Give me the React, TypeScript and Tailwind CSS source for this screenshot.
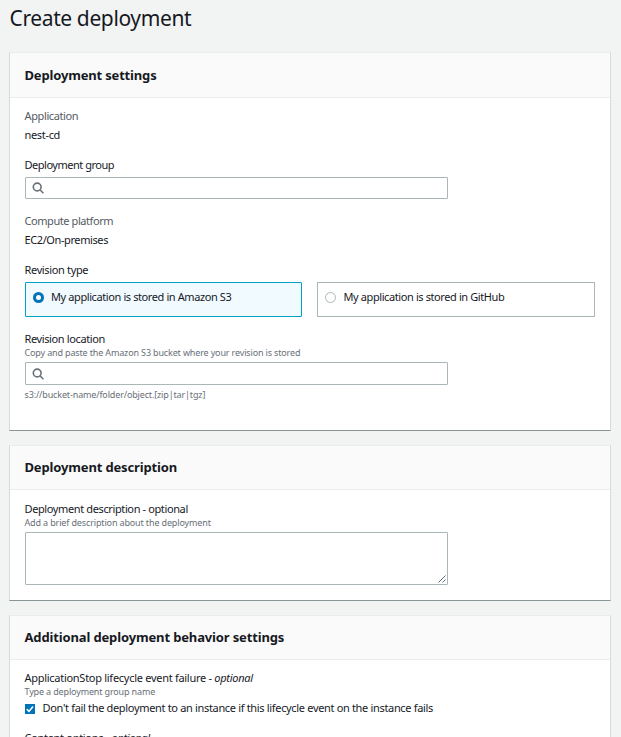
import type { ReactNode } from "react";

function Card({ title, titleClass, headerClass, className, children }: { title: string; titleClass: string; headerClass: string; className: string; children: ReactNode }) {
  return (
    <section className={`flex w-[602px] shrink-0 flex-col border border-t-[#eaeded] border-x-[#d5dbdb] border-b-[#879596] bg-white ${className}`}>
      <header className={`flex shrink-0 items-start border-b border-[#eaeded] bg-[#fafafa] pl-[14.5px] ${headerClass}`}>
        <h2 className={`text-[13px] leading-[20px] font-bold whitespace-nowrap ${titleClass}`}>{title}</h2>
      </header>
      <div className="flex flex-col px-[15px]">{children}</div>
    </section>
  );
}

function Line({ className, children }: { className: string; children: ReactNode }) {
  return <div className={`-ml-[0.5px] h-[18px] self-start text-[11px] leading-[18px] whitespace-nowrap ${className}`}>{children}</div>;
}

function Hint({ className, children }: { className: string; children: ReactNode }) {
  return <div className={`-ml-[0.5px] h-[11px] self-start text-[9px] leading-[11px] whitespace-nowrap text-[#687078] ${className}`}>{children}</div>;
}

function SearchField({ className }: { className: string }) {
  return (
    <div className={`flex w-[423px] items-center rounded-[1px] border border-[#aab7b8] bg-white pl-[6px] ${className}`}>
      <svg width="12" height="12" viewBox="0 0 12 12" fill="none" stroke="#687078" strokeWidth="1.6">
        <circle cx="5.2" cy="5" r="3.9" />
        <path d="M8 7.8 11.4 11.2" />
      </svg>
    </div>
  );
}

export default function App() {
  return (
    <main className="flex h-[737px] w-[621px] flex-col overflow-hidden bg-[#f2f3f3] pl-[9px] font-['Noto_Sans','Open_Sans',sans-serif] text-[#16191f]">
      <h1 className="mt-[3px] mb-[19px] h-[30px] shrink-0 self-start pl-[0.5px] text-[21px] leading-[30px] whitespace-nowrap tracking-[-0.38px]">Create deployment</h1>

      <Card title="Deployment settings" titleClass="tracking-[-0.17px]" headerClass="h-[45px] pt-[12px]" className="h-[379px]">
        <Line className="mt-[9px] text-[#545b64] tracking-[-0.38px]">Application</Line>
        <Line className="mt-px tracking-[-0.33px]">nest-cd</Line>
        <Line className="mt-3 tracking-[-0.48px]">Deployment group</Line>
        <SearchField className="mt-[3px] h-[22px]" />
        <Line className="mt-[13px] text-[#545b64] tracking-[-0.43px]">Compute platform</Line>
        <Line className="mt-px tracking-[-0.4px]">EC2/On-premises</Line>
        <Line className="mt-3 tracking-[-0.35px]">Revision type</Line>
        <div className="mt-[3px] flex gap-[15px]">
          <div className="flex h-[35px] w-[277px] rounded-[1px] border border-[#00a1c9] bg-[#f1faff] pt-[5px] pl-[7px]">
            <span className="mt-[4px] mr-[7.5px] flex size-[11px] items-center justify-center rounded-full bg-[#0073bb]">
              <span className="size-[5px] rounded-full bg-white" />
            </span>
            <Line className="tracking-[-0.4px]">My application is stored in Amazon S3</Line>
          </div>
          <div className="flex h-[35px] w-[278px] border border-[#aab7b8] bg-white pt-[5px] pl-[7px]">
            <span className="mt-[4px] mr-[8px] size-[11px] rounded-full border border-[#aab7b8]" />
            <Line className="tracking-[-0.4px]">My application is stored in GitHub</Line>
          </div>
        </div>
        <Line className="mt-[13px] tracking-[-0.38px]">Revision location</Line>
        <Hint className="-mt-px tracking-[-0.15px]">Copy and paste the Amazon S3 bucket where your revision is stored</Hint>
        <SearchField className="mt-[4px] h-[23px]" />
        <Hint className="mt-[4px] tracking-[-0.15px]">s3://bucket-name/folder/object.[zip|tar|tgz]</Hint>
      </Card>

      <Card title="Deployment description" titleClass="tracking-[-0.15px]" headerClass="h-[44px] pt-[11px]" className="mt-[14px] h-[156px]">
        <Line className="mt-[10px] tracking-[-0.38px]">Deployment description - optional</Line>
        <Hint className="-mt-px tracking-[-0.14px]">Add a brief description about the deployment</Hint>
        <div className="mt-[4px] flex h-[53px] w-[423px] items-end justify-end rounded-[1px] border border-[#aab7b8] p-px">
          <svg width="8" height="8" viewBox="0 0 8 8" stroke="#545b64" strokeWidth="0.9">
            <path d="M0.5 7.5 7.5 0.5M4.5 7.5 7.5 4.5" />
          </svg>
        </div>
      </Card>

      <Card title="Additional deployment behavior settings" titleClass="tracking-[-0.14px]" headerClass="h-[44px] pt-[11px]" className="mt-[14px] h-[180px]">
        <Line className="mt-[9px] tracking-[-0.28px]">ApplicationStop lifecycle event failure - <em>optional</em></Line>
        <Hint className="-mt-px tracking-[-0.15px]">Type a deployment group name</Hint>
        <div className="mt-[2px] flex">
          <span className="mt-[5px] mr-[8px] size-[10px] bg-[#0073bb]">
            <svg width="10" height="10" viewBox="0 0 10 10" fill="none" stroke="white" strokeWidth="1.6">
              <path d="M1.8 5.2 4 7.4 8 2.4" />
            </svg>
          </span>
          <Line className="tracking-[-0.33px]">Don't fail the deployment to an instance if this lifecycle event on the instance fails</Line>
        </div>
        <Line className="mt-3 tracking-[-0.3px]">Content options - <em>optional</em></Line>
      </Card>
    </main>
  );
}
